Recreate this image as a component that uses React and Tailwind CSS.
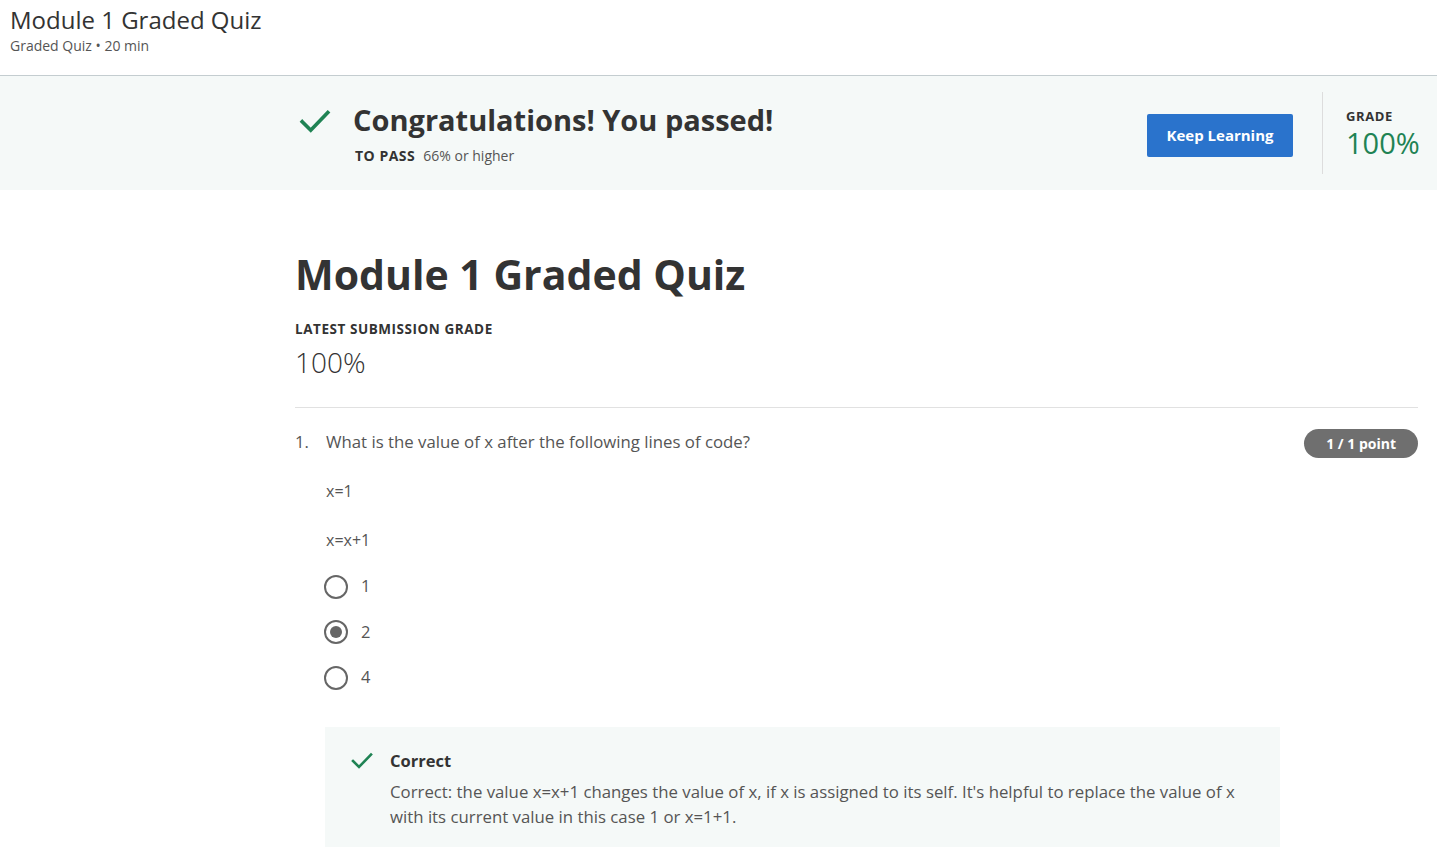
import React from 'react';

const Check = ({ className }) => (
  <svg viewBox="0 0 24 24" className={className} fill="none" stroke="currentColor" strokeWidth="2.6" strokeLinecap="square">
    <path d="M3 12.5l6 6L21 6" />
  </svg>
);

const Radio = ({ checked }) => (
  <span className="w-6 h-6 rounded-full border-2 border-[#666] flex items-center justify-center bg-white">
    {checked && <span className="w-3 h-3 rounded-full bg-[#666]" />}
  </span>
);

const options = [
  { label: '1', checked: false },
  { label: '2', checked: true },
  { label: '4', checked: false },
];

export default function App() {
  return (
    <div className="min-h-screen bg-white text-[#333] font-['Open_Sans',sans-serif]">
      {/* top header */}
      <header className="h-[76px] border-b border-[#c4cdd0] px-[10px] pt-[4px]">
        <h2 className="text-[24px] leading-[32px] text-[#333]">Module 1 Graded Quiz</h2>
        <p className="text-[14px] leading-[20px] text-[#555]">Graded Quiz • 20 min</p>
      </header>

      {/* pass banner */}
      <div className="bg-[#f5f9f8] h-[114px] flex items-center pl-[298px] pr-[19px]">
        <div className="flex items-start flex-1">
          <Check className="w-[34px] h-[34px] text-[#1f8354] mt-[4px]" />
          <div className="ml-[21px]">
            <h3 className="text-[29px] font-bold leading-[40px] text-[#333]">Congratulations! You passed!</h3>
            <p className="text-[14px] leading-[20px] mt-[6px] ml-[2px]">
              <span className="font-bold tracking-[0.5px] text-[#333]">TO PASS</span>
              <span className="ml-[8px] text-[#555]">66% or higher</span>
            </p>
          </div>
        </div>
        <button className="bg-[#2a73cc] text-white font-bold text-[15px] w-[146px] h-[43px] rounded-[2px] mr-[29px] mt-[4px]">
          Keep Learning
        </button>
        <div className="border-l border-[#ddd] h-[82px] pl-[23px] pt-[16px] w-[96px]">
          <div className="text-[13px] font-bold tracking-[0.6px] leading-[16px] text-[#333]">GRADE</div>
          <div className="text-[29px] leading-[34px] mt-[2px] text-[#1f8354]">100%</div>
        </div>
      </div>

      {/* main content */}
      <main className="ml-[295px] mr-[19px] pt-[56px]">
        <h1 className="text-[41px] font-bold leading-[56px] text-[#333]">Module 1 Graded Quiz</h1>
        <div className="mt-[19px] text-[13.5px] font-bold tracking-[0.55px] leading-[16px] text-[#333]">LATEST SUBMISSION GRADE</div>
        <div className="text-[28px] leading-[40px] mt-[5px] text-[#333] font-light">100%</div>
        <hr className="mt-[25px] border-t border-[#e1e1e1]" />

        <div className="mt-[20px] flex items-start">
          <span className="w-[31px] text-[16.5px] leading-[28px] text-[#555]">1.</span>
          <div className="flex-1">
            <p className="text-[16.8px] leading-[28px] text-[#555]">What is the value of x after the following lines of code?</p>
            <p className="mt-[21px] text-[16px] leading-[28px] text-[#555]">x=1</p>
            <p className="mt-[21px] text-[16px] leading-[28px] text-[#555]">x=x+1</p>
            <div className="mt-[10px] -ml-[2px] flex flex-col">
              {options.map((o) => (
                <label key={o.label} className="flex items-center h-[45.5px] gap-[13px] text-[16.5px] text-[#555]">
                  <Radio checked={o.checked} />
                  <span>{o.label}</span>
                </label>
              ))}
            </div>
          </div>
          <span className="bg-[#6f6f6f] text-white text-[14px] font-bold rounded-full h-[29px] px-[22px] flex items-center mt-[1px]">
            1 / 1 point
          </span>
        </div>

        <div className="ml-[30px] mr-[138px] mt-[26px] bg-[#f5f9f8] pl-[25px] pr-[20px] pt-[21px] pb-[18px] flex items-start">
          <Check className="w-[33px] h-[33px] text-[#1f8354] -mt-[4px]" />
          <div className="ml-[7px] pl-[9px]">
            <div className="text-[16.5px] font-bold leading-[26px] text-[#333]">Correct</div>
            <p className="text-[16.8px] leading-[25px] mt-[5px] text-[#555]">
              Correct: the value x=x+1 changes the value of x, if x is assigned to its self. It's helpful to replace the value of x with its current value in this case 1 or x=1+1.
            </p>
          </div>
        </div>
      </main>
    </div>
  );
}
